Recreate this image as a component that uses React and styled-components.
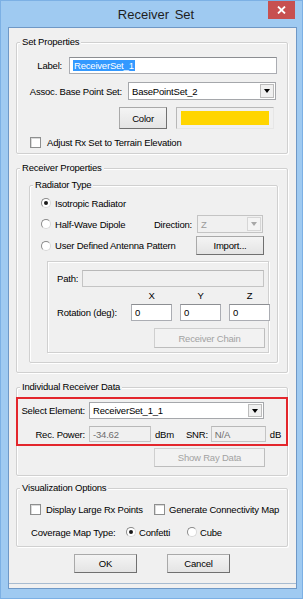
import React from "react"
import styled, {createGlobalStyle} from "styled-components"

const GlobalStyle = createGlobalStyle`
    html, body {
        margin: 0;
        padding: 0;
        background: #9fcaf1;
    }
    body {
        font-family: "Liberation Sans", Arial, sans-serif;
        font-size: 9.5px;
        letter-spacing: -0.2px;
        color: #000;
    }
`

const Window = styled.div`
    width: 303px;
    height: 599px;
    box-sizing: border-box;
    display: flex;
    flex-direction: column;
    background: #9fcaf1;
    border: 1px solid #7cb0e4;
    padding: 0 5px 9px 7px;
`
const TitleBar = styled.div`
    height: 26px;
    flex-shrink: 0;
    display: flex;
    align-items: flex-start;
`
const Title = styled.div`
    flex: 1;
    align-self: center;
    text-align: center;
    padding-left: 36px;
    font-size: 13px;
    letter-spacing: 0;
    word-spacing: 2px;
    color: #1e1e1e;
`
const CloseButton = styled.div`
    width: 27px;
    height: 18px;
    margin-right: 2px;
    background: #c75050;
    display: flex;
    align-items: center;
    justify-content: center;
`
const Client = styled.div`
    flex: 1;
    box-sizing: border-box;
    display: flex;
    flex-direction: column;
    background: #f0f0f0;
    border: 1px solid #6f98c6;
`
const Group = styled.div`
    position: relative;
    box-sizing: border-box;
    flex-shrink: 0;
    display: flex;
    flex-direction: column;
    margin: ${p => p.$mt}px 0 0 ${p => p.$ml ?? 7}px;
    width: ${p => p.$w ?? 272}px;
    height: ${p => p.$h}px;
    border: 1px solid #d0d0d0;
    border-radius: 2px;
    box-shadow: inset 1px 1px 0 #fff, 1px 1px 0 #fff;
`
const Legend = styled.span`
    position: absolute;
    top: -7px;
    left: 3px;
    padding: 0 2px;
    line-height: 12px;
    background: #f0f0f0;
    white-space: nowrap;
`
const Row = styled.div`
    display: flex;
    align-items: center;
    flex-shrink: 0;
    height: ${p => p.$h}px;
    margin-top: ${p => p.$mt || 0}px;
    padding-left: ${p => p.$pl || 0}px;
    padding-right: ${p => p.$pr || 0}px;
    justify-content: ${p => p.$justify || "flex-start"};
    gap: ${p => p.$gap || 0}px;
`
const FieldLabel = styled.span`
    flex-shrink: 0;
    box-sizing: border-box;
    width: ${p => p.$w}px;
    text-align: ${p => p.$align || "right"};
    padding-right: ${p => p.$pr || 0}px;
    white-space: nowrap;
`
const Text = styled.span`
    flex-shrink: 0;
    white-space: nowrap;
    margin-left: ${p => p.$ml || 0}px;
`
const TextBox = styled.div`
    box-sizing: border-box;
    flex-shrink: 0;
    width: ${p => p.$w}px;
    height: ${p => p.$h || 17}px;
    margin-left: ${p => p.$ml || 0}px;
    display: flex;
    align-items: center;
    padding-left: 3px;
    border: 1px solid ${p => p.$disabled ? "#c4c4c4" : "#abadb3"};
    border-top-color: ${p => p.$disabled ? "#b8b8b8" : "#8c8e92"};
    background: ${p => p.$disabled ? "#f0f0f0" : "#fff"};
    color: ${p => p.$disabled ? "#6d6d6d" : "#000"};
    white-space: nowrap;
    overflow: hidden;
`
const Selected = styled.span`
    background: #3399ff;
    color: #fff;
    padding: 0 1px;
`
const ComboBox = styled.div`
    box-sizing: border-box;
    flex-shrink: 0;
    width: ${p => p.$w}px;
    height: ${p => p.$h || 17}px;
    display: flex;
    align-items: center;
    padding-left: 3px;
    border: 1px solid ${p => p.$disabled ? "#c4c4c4" : "#a5a7ab"};
    background: ${p => p.$disabled ? "#f0f0f0" : "#fff"};
    color: ${p => p.$disabled ? "#9a9a9a" : "#000"};
`
const ComboValue = styled.span`
    flex: 1;
    white-space: nowrap;
`
const ComboArrow = styled.span`
    box-sizing: border-box;
    width: 14px;
    height: calc(100% - 2px);
    margin-right: 1px;
    display: flex;
    align-items: center;
    justify-content: center;
    background: ${p => p.$disabled ? "#f4f4f4" : "#f0f0f0"};
    border: 1px solid ${p => p.$disabled ? "#d6d6d6" : "#bcbcbc"};
    &::after {
        content: "";
        border-left: 3.5px solid transparent;
        border-right: 3.5px solid transparent;
        border-top: 4px solid ${p => p.$disabled ? "#a8a8a8" : "#000"};
    }
`
const Button = styled.button`
    box-sizing: border-box;
    flex-shrink: 0;
    width: ${p => p.$w}px;
    height: ${p => p.$h}px;
    padding: 0;
    margin-top: ${p => p.$mt || 0}px;
    margin-right: ${p => p.$mr || 0}px;
    align-self: ${p => p.$self || "auto"};
    margin-left: ${p => p.$auto ? "auto" : "0"};
    font: inherit;
    letter-spacing: inherit;
    display: flex;
    align-items: center;
    justify-content: center;
    border: 1px solid ${p => p.disabled ? "#cfcfcf" : "#a9a9a9"};
    border-right-color: ${p => p.disabled ? "#bdbdbd" : "#707070"};
    border-bottom-color: ${p => p.disabled ? "#bdbdbd" : "#707070"};
    background: ${p => p.disabled ? "#f2f2f2" : "linear-gradient(#f4f4f4, #e4e4e4)"};
    color: ${p => p.disabled ? "#a2a2a2" : "#000"};
`
const Swatch = styled.div`
    box-sizing: border-box;
    width: ${p => p.$w}px;
    height: 22px;
    padding: 3px 4px;
    border: 1px solid #b8b8b8;
    border-right-color: #e6e6e6;
    border-bottom-color: #e6e6e6;
    background: #f0f0f0;
`
const SwatchFill = styled.div`
    width: 100%;
    height: 100%;
    background: ${p => p.$color};
`
const CheckBox = styled.span`
    box-sizing: border-box;
    flex-shrink: 0;
    width: 11px;
    height: 11px;
    margin-left: ${p => p.$ml || 0}px;
    background: #fff;
    border: 1px solid #8e8f8f;
    box-shadow: inset 1px 1px 0 #dadada;
`
const Radio = styled.span`
    position: relative;
    box-sizing: border-box;
    flex-shrink: 0;
    width: 10px;
    height: 10px;
    border-radius: 50%;
    background: #fff;
    border: 1px solid #8a8a8a;
    border-right-color: #d8d8d8;
    border-bottom-color: #d8d8d8;
    &::after {
        content: "";
        display: ${p => p.$checked ? "block" : "none"};
        position: absolute;
        left: 2px;
        top: 2px;
        width: 4px;
        height: 4px;
        border-radius: 50%;
        background: #1a1a1a;
    }
`
const Option = styled.span`
    display: flex;
    align-items: center;
    flex-shrink: 0;
    width: ${p => p.$w ? `${p.$w}px` : "auto"};
`
const PushRight = styled.span`
    margin-left: auto;
    display: flex;
    align-items: center;
    gap: 5px;
`
const Panel = styled.div`
    box-sizing: border-box;
    display: flex;
    flex-direction: column;
    flex-shrink: 0;
    margin: 6px 0 0 17px;
    width: 222px;
    height: 92px;
    border: 1px solid #d0d0d0;
    box-shadow: inset 1px 1px 0 #fff, 1px 1px 0 #fff;
`
const AxisGrid = styled.div`
    display: grid;
    grid-template-columns: 66px 41px 41px 41px;
    column-gap: 8px;
    align-items: center;
    height: ${p => p.$h}px;
    margin-top: ${p => p.$mt}px;
    padding-left: 9px;
`
const AxisLabel = styled.span`
    text-align: center;
`
const Highlight = styled.div`
    box-sizing: border-box;
    display: flex;
    flex-direction: column;
    margin: 9px -1px 0 -1px;
    height: 49px;
    border: 2px solid #e3262c;
`
const ButtonRow = styled.div`
    display: flex;
    gap: 30px;
    margin-top: 7px;
    padding-left: 65px;
    flex-shrink: 0;
`
const StatusLine = styled.div`
    margin-top: auto;
    height: 5px;
    box-sizing: border-box;
    border-top: 1px solid #a7bbd0;
`

const Combo = ({value, w, h, disabled}) => (
    <ComboBox $w={w} $h={h} $disabled={disabled}>
        <ComboValue>{value}</ComboValue>
        <ComboArrow $disabled={disabled}/>
    </ComboBox>
)

const App = () => {
    return (
        <Window>
            <GlobalStyle/>
            <TitleBar>
                <Title>Receiver Set</Title>
                <CloseButton>
                    <svg width="9" height="8" viewBox="0 0 9 8">
                        <path d="M1 0.5 L8 7.5 M8 0.5 L1 7.5" stroke="#fff" strokeWidth="1.8"/>
                    </svg>
                </CloseButton>
            </TitleBar>

            <Client>

                <Group $mt={14} $h={112}>
                    <Legend>Set Properties</Legend>
                    <Row $mt={14} $h={17}>
                        <FieldLabel $w={52} $pr={7}>Label:</FieldLabel>
                        <TextBox $w={208}><Selected>ReceiverSet_1</Selected></TextBox>
                    </Row>
                    <Row $mt={8} $h={18}>
                        <FieldLabel $w={111} $pr={6}>Assoc. Base Point Set:</FieldLabel>
                        <Combo w={148} h={18} value="BasePointSet_2"/>
                    </Row>
                    <Row $mt={7} $h={22} $justify="flex-end" $pr={13} $gap={9}>
                        <Button $w={48} $h={22}>Color</Button>
                        <Swatch $w={98}><SwatchFill $color="#ffd500"/></Swatch>
                    </Row>
                    <Row $mt={7} $h={13} $pl={13}>
                        <CheckBox/>
                        <Text $ml={6}>Adjust Rx Set to Terrain Elevation</Text>
                    </Row>
                </Group>

                <Group $mt={14} $h={205}>
                    <Legend>Receiver Properties</Legend>

                    <Group $mt={16} $ml={12} $w={249} $h={178}>
                        <Legend>Radiator Type</Legend>
                        <Row $mt={10} $h={14} $pl={11}>
                            <Radio $checked/>
                            <Text $ml={4}>Isotropic Radiator</Text>
                        </Row>
                        <Row $mt={5} $h={18} $pl={11} $pr={14}>
                            <Radio/>
                            <Text $ml={4}>Half-Wave Dipole</Text>
                            <PushRight>
                                <Text>Direction:</Text>
                                <Combo w={66} h={18} value="Z" disabled/>
                            </PushRight>
                        </Row>
                        <Row $mt={3} $h={19} $pl={11} $pr={13}>
                            <Radio/>
                            <Text $ml={4}>User Defined Antenna Pattern</Text>
                            <Button $w={68} $h={19} $auto>Import...</Button>
                        </Row>

                        <Panel>
                            <Row $mt={8} $h={17} $pl={9}>
                                <FieldLabel $w={25} $align="left">Path:</FieldLabel>
                                <TextBox $w={182} $disabled/>
                            </Row>
                            <AxisGrid $mt={2} $h={12}>
                                <span/>
                                <AxisLabel>X</AxisLabel>
                                <AxisLabel>Y</AxisLabel>
                                <AxisLabel>Z</AxisLabel>
                            </AxisGrid>
                            <AxisGrid $mt={3} $h={17}>
                                <span>Rotation (deg):</span>
                                <TextBox $w={41}>0</TextBox>
                                <TextBox $w={41}>0</TextBox>
                                <TextBox $w={41}>0</TextBox>
                            </AxisGrid>
                            <Button $w={111} $h={20} $mt={7} $mr={3} $self="flex-end" disabled>Receiver Chain</Button>
                        </Panel>
                    </Group>
                </Group>

                <Group $mt={14} $h={89}>
                    <Legend>Individual Receiver Data</Legend>
                    <Highlight>
                        <Row $mt={3} $h={17}>
                            <FieldLabel $w={71} $pr={4}>Select Element:</FieldLabel>
                            <Combo w={175} h={17} value="ReceiverSet_1_1"/>
                        </Row>
                        <Row $mt={7} $h={16}>
                            <FieldLabel $w={71} $pr={4}>Rec. Power:</FieldLabel>
                            <TextBox $w={62} $h={16} $disabled>-34.62</TextBox>
                            <Text $ml={4}>dBm</Text>
                            <Text $ml={12}>SNR:</Text>
                            <TextBox $w={55} $h={16} $ml={3} $disabled>N/A</TextBox>
                            <Text $ml={4}>dB</Text>
                        </Row>
                    </Highlight>
                    <Button $w={111} $h={19} $mt={2} $mr={22} $self="flex-end" disabled>Show Ray Data</Button>
                </Group>

                <Group $mt={12} $h={59}>
                    <Legend>Visualization Options</Legend>
                    <Row $mt={15} $h={11} $pl={13}>
                        <Option $w={124}>
                            <CheckBox/>
                            <Text $ml={5}>Display Large Rx Points</Text>
                        </Option>
                        <Option>
                            <CheckBox/>
                            <Text $ml={4}>Generate Connectivity Map</Text>
                        </Option>
                    </Row>
                    <Row $mt={11} $h={12} $pl={14}>
                        <FieldLabel $w={95} $align="left">Coverage Map Type:</FieldLabel>
                        <Option $w={61}>
                            <Radio $checked/>
                            <Text $ml={3}>Confetti</Text>
                        </Option>
                        <Option>
                            <Radio/>
                            <Text $ml={3}>Cube</Text>
                        </Option>
                    </Row>
                </Group>

                <ButtonRow>
                    <Button $w={63} $h={19}>OK</Button>
                    <Button $w={63} $h={19}>Cancel</Button>
                </ButtonRow>

                <StatusLine/>
            </Client>
        </Window>
    )
}

export default App
